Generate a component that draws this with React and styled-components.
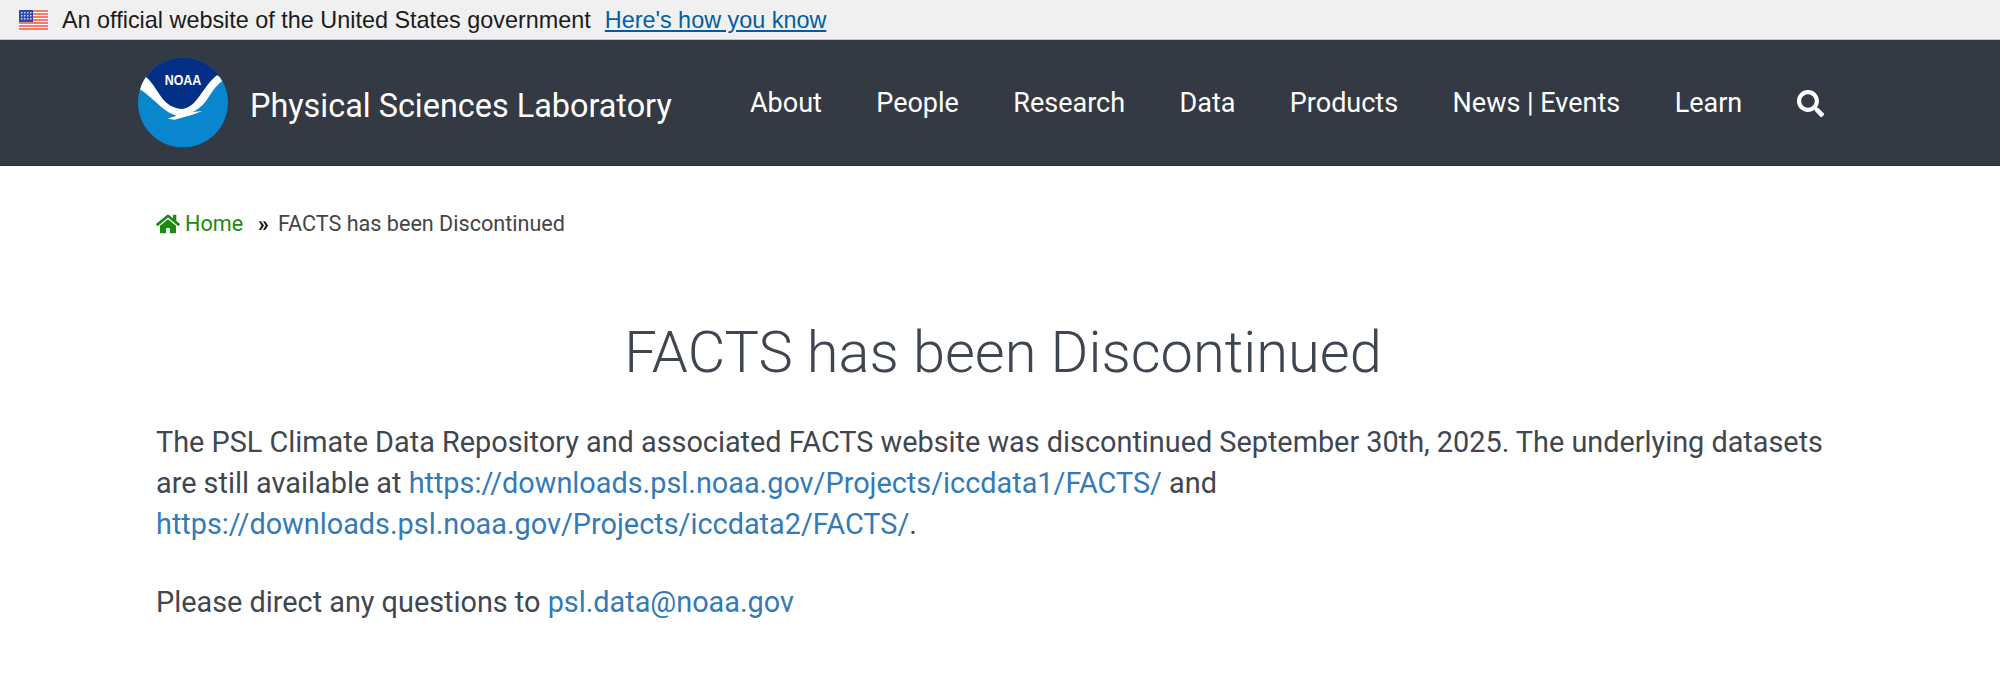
import React from "react";
import styled, { createGlobalStyle } from "styled-components";
import { FaHome, FaSearch } from "react-icons/fa";

const GlobalStyle = createGlobalStyle`
  html, body {
    margin: 0;
    padding: 0;
    background: #fff;
  }
  body {
    font-family: Roboto, "Liberation Sans", sans-serif;
    color: #3f4650;
  }
`;

const GovBanner = styled.div`
  height: 38px;
  background: #f0f0f0;
  border-bottom: 1px solid #c4c4c4;
  display: flex;
  align-items: center;
  padding: 1px 0 0 19px;
  font-family: "Liberation Sans", Arial, sans-serif;
  font-size: 23.4px;
  color: #1b1b1b;
`;
const GovText = styled.span`
  margin-left: 14px;
`;
const GovLink = styled.a`
  margin-left: 14px;
  color: #005ea2;
  text-decoration: underline;
`;
const Header = styled.header`
  height: 126px;
  box-sizing: border-box;
  background: #343a43;
  border-bottom: 1px solid #2b3038;
  display: flex;
  align-items: center;
  padding-left: 138px;
`;
const Brand = styled.a`
  display: flex;
  align-items: center;
  gap: 22px;
  color: #fff;
  font-size: 32.4px;
  width: 612px;
  text-decoration: none;
`;
const BrandName = styled.span`
  padding-top: 6px;
`;
const Nav = styled.nav`
  display: flex;
  align-items: center;
  gap: 54.4px;
  padding-top: 1px;
  color: #fff;
  font-size: 27px;
`;
const NavItem = styled.a`
  color: #fff;
  text-decoration: none;
`;
const SearchButton = styled.a`
  display: flex;
  color: #fff;
  font-size: 27px;
`;
const Main = styled.main`
  padding: 0 150px 0 156px;
`;
const Crumbs = styled.div`
  display: flex;
  align-items: center;
  padding-top: 43px;
  font-size: 21.6px;
  line-height: 30px;
  color: #444;
`;
const HomeLink = styled.a`
  display: flex;
  align-items: center;
  gap: 5px;
  color: #1a8a10;
  text-decoration: none;
  svg {
    font-size: 24px;
  }
`;
const Sep = styled.span`
  margin: 0 9px 0 15px;
  color: #111;
  font-weight: 700;
`;
const Title = styled.h1`
  margin: 74px 0 0;
  text-align: center;
  font-weight: 300;
  font-size: 57.8px;
  line-height: 78px;
  color: #3f4650;
`;
const Para = styled.p`
  margin: 31px 0 0;
  font-size: 28.84px;
  line-height: 41.14px;
  color: #3f4650;
  & + & {
    margin-top: 37px;
  }
`;
const TextLink = styled.a`
  color: #337ab7;
  text-decoration: none;
`;

const UsFlag = () => (
  <svg width="29" height="20" viewBox="0 0 29 20">
    <rect width="29" height="20" fill="#fff" />
    {[0, 3, 6, 9, 12, 15, 18].map((y) => (
      <rect key={y} y={y} width="29" height="2" fill="#f47c6a" />
    ))}
    <rect width="14" height="12" fill="#2e4bab" />
    {[2, 5, 8].map((y) =>
      [2, 5, 8, 11].map((x) => (
        <rect key={`${x}-${y}`} x={x} y={y} width="1.5" height="1.5" fill="#cfd6f0" />
      ))
    )}
  </svg>
);

const NoaaLogo = () => (
  <svg width="90" height="91" viewBox="0 0 91 91">
    <defs>
      <clipPath id="disc">
        <circle cx="45.5" cy="45.5" r="45.5" />
      </clipPath>
    </defs>
    <g clipPath="url(#disc)">
      <rect width="91" height="91" fill="#0a86cf" />
      <path
        d="M0 0H91V22L80 18C72 24 67 33 60 42C56 47 51 52 44 52C38 52 31 49 25 42C19 34 14 24 7 19L0 24Z"
        fill="#042f87"
      />
      <path
        d="M7 19C14 24 19 34 25 42C31 49 38 52 44 52C51 52 56 47 60 42C67 33 72 24 80 18C82 19 84 21 85 24C77 30 73 38 68 45C64 50 60 53 55 55L65 54L55 58L37 63L30 62L39 59L32 56C22 50 14 40 2 32C3 27 5 22 7 19Z"
        fill="#fff"
      />
    </g>
    <text
      x="45.5"
      y="28"
      textAnchor="middle"
      textLength="37"
      lengthAdjust="spacingAndGlyphs"
      fontFamily="'Liberation Sans', sans-serif"
      fontWeight="700"
      fontSize="15"
      fill="#fff"
    >
      NOAA
    </text>
  </svg>
);

const navItems = ["About", "People", "Research", "Data", "Products", "News | Events", "Learn"];

export default function App() {
  return (
    <>
      <GlobalStyle />
      <GovBanner>
        <UsFlag />
        <GovText>An official website of the United States government</GovText>
        <GovLink href="#">Here's how you know</GovLink>
      </GovBanner>
      <Header>
        <Brand href="#">
          <NoaaLogo />
          <BrandName>Physical Sciences Laboratory</BrandName>
        </Brand>
        <Nav>
          {navItems.map((item) => (
            <NavItem href="#" key={item}>
              {item}
            </NavItem>
          ))}
          <SearchButton href="#">
            <FaSearch />
          </SearchButton>
        </Nav>
      </Header>
      <Main>
        <Crumbs>
          <HomeLink href="#">
            <FaHome />
            Home
          </HomeLink>
          <Sep>»</Sep>
          FACTS has been Discontinued
        </Crumbs>
        <Title>FACTS has been Discontinued</Title>
        <Para>
          The PSL Climate Data Repository and associated FACTS website was discontinued September
          30th, 2025. The underlying datasets are still available at{" "}
          <TextLink href="#">https://downloads.psl.noaa.gov/Projects/iccdata1/FACTS/</TextLink> and{" "}
          <TextLink href="#">https://downloads.psl.noaa.gov/Projects/iccdata2/FACTS/</TextLink>.
        </Para>
        <Para>
          Please direct any questions to <TextLink href="#">psl.data@noaa.gov</TextLink>
        </Para>
      </Main>
    </>
  );
}
